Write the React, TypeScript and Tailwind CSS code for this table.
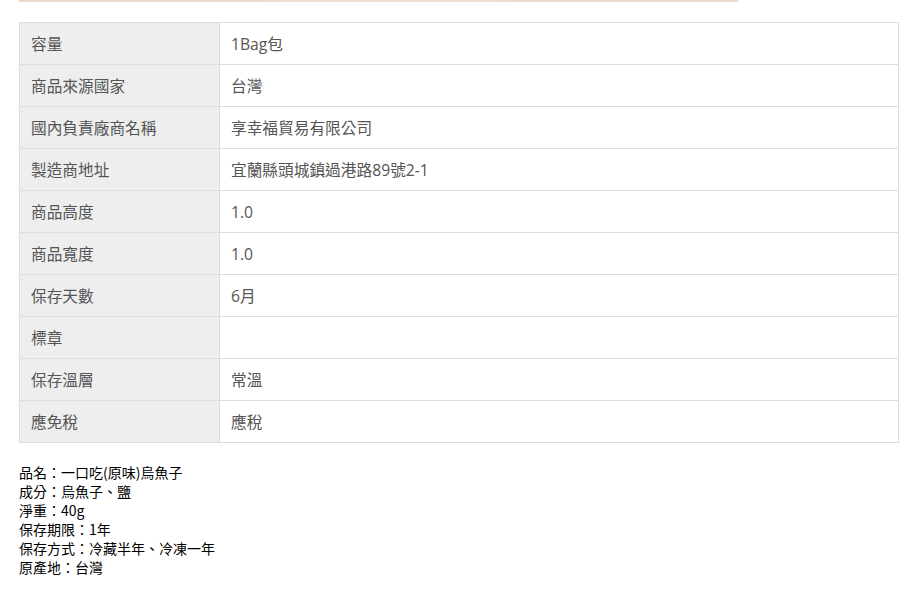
export default function App() {
  const rows: [string, string][] = [
    ["容量", "1Bag包"],
    ["商品來源國家", "台灣"],
    ["國內負責廠商名稱", "享幸福貿易有限公司"],
    ["製造商地址", "宜蘭縣頭城鎮過港路89號2-1"],
    ["商品高度", "1.0"],
    ["商品寬度", "1.0"],
    ["保存天數", "6月"],
    ["標章", ""],
    ["保存溫層", "常溫"],
    ["應免稅", "應稅"],
  ]
  const notes = [
    "品名：一口吃(原味)烏魚子",
    "成分：烏魚子、鹽",
    "淨重：40g",
    "保存期限：1年",
    "保存方式：冷藏半年、冷凍一年",
    "原產地：台灣",
  ]

  return (
    <div className="w-[917px] h-[598px] bg-white overflow-hidden" style={{ fontFamily: '"Open Sans", "Noto Sans CJK TC", sans-serif' }}>
      <div className="border-b border-[#eeeeee]">
        <div className="ml-[19px] w-[719px] h-[2px] bg-gradient-to-r from-[#ead9c8] via-[#efe0d2] to-[#ecdacb]" />

        <table className="ml-[19px] mt-[20px] w-[880px] border-collapse text-[15.7px] text-[#555555]">
          <tbody>
            {rows.map(([k, v]) => (
              <tr key={k} className="h-[42px]">
                <td className="w-[200px] border border-[#dddddd] bg-[#eeeeee] px-[11px] leading-[20px] align-middle">{k}</td>
                <td className="border border-[#dddddd] px-[11px] leading-[20px] align-middle">{v}</td>
              </tr>
            ))}
          </tbody>
        </table>

        <div className="ml-[19px] mt-[20px] pb-[21px] text-[14px] leading-[19px] text-black" style={{ fontFamily: '"Noto Sans CJK TC", sans-serif' }}>
          {notes.map((n) => (
            <div key={n}>{n}</div>
          ))}
        </div>
      </div>
    </div>
  )
}
